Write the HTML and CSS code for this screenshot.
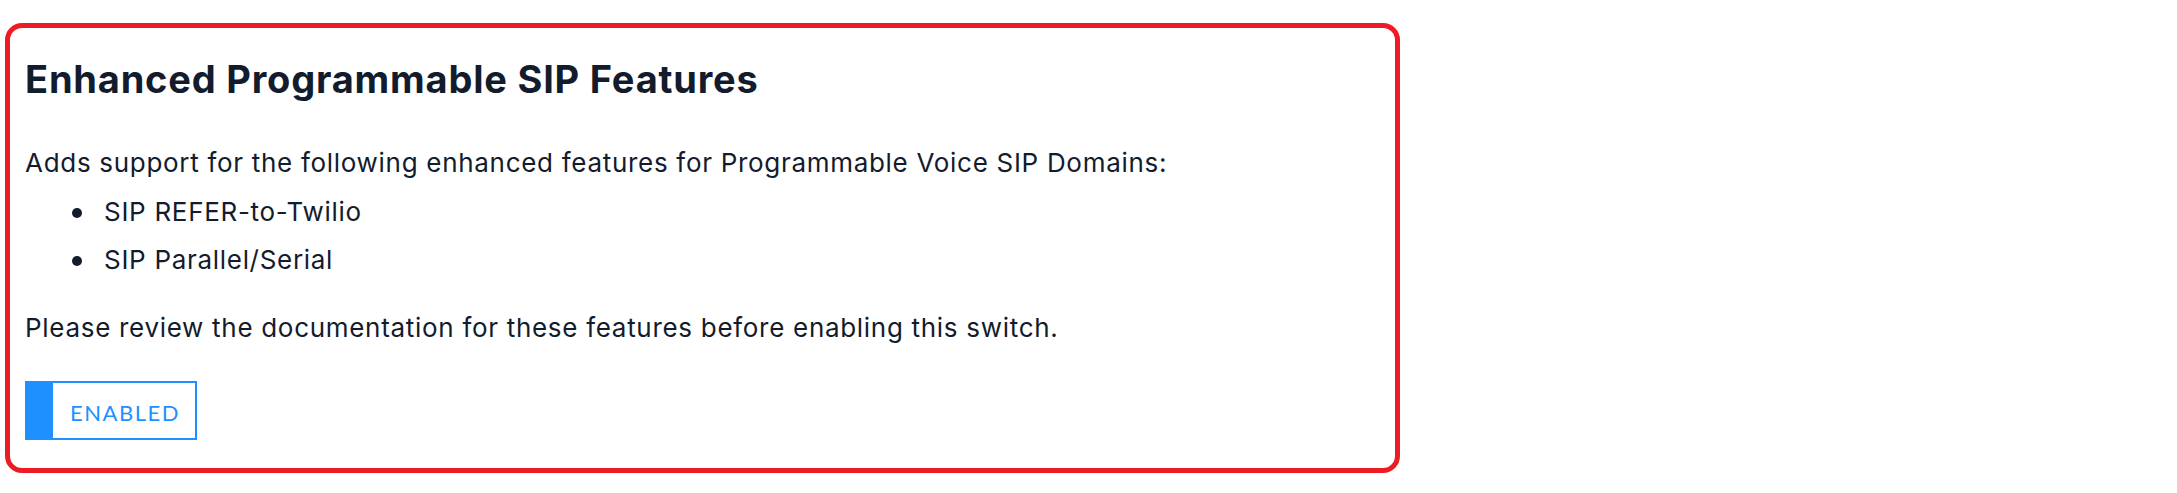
FILE: index.html
```html
<!DOCTYPE html>
<html>
<head>
<meta charset="utf-8">
<title>Enhanced Programmable SIP Features</title>
<link rel="stylesheet" href="styles.css">
</head>
<body>
<div class="feature-card">
  <h1 class="feature-title">Enhanced Programmable SIP Features</h1>
  <p class="feature-text">Adds support for the following enhanced features for Programmable Voice SIP Domains:</p>
  <ul class="feature-list">
    <li>SIP REFER-to-Twilio</li>
    <li>SIP Parallel/Serial</li>
  </ul>
  <p class="feature-note">Please review the documentation for these features before enabling this switch.</p>
  <div class="toggle on">
    <span class="toggle-knob"></span>
    <span class="toggle-label">ENABLED</span>
  </div>
</div>
</body>
</html>
```

FILE: styles.css
```css
body {
  margin: 0;
  background: #fff;
  font-family: Inter, "Noto Sans", sans-serif;
  color: #121c2d;
  }
.feature-card {
  box-sizing: border-box;
  width: 1395px;
  margin: 23px 0 0 5px;
  padding: 28px 15px 26px 15px;
  border: 5px solid #ed1c24;
  border-radius: 17px;
  }
.feature-title {
  margin: 0 0 41px 0;
  font-size: 38px;
  line-height: 46px;
  font-weight: 700;
  letter-spacing: 0.8px;
  }
.feature-text,
.feature-note {
  margin: 0;
  font-size: 26px;
  line-height: 39px;
  letter-spacing: 0.7px;
  }
.feature-list {
  list-style: none;
  margin: 10px 0 29px 0;
  padding-left: 47px;
  font-size: 26px;
  line-height: 39px;
  letter-spacing: 0.7px;
  }
.feature-list li {
  display: flex;
  align-items: center;
  }
.feature-list li::before {
  content: "";
  width: 10px;
  height: 10px;
  margin: 2px 22px 0 0;
  border-radius: 50%;
  background: #121c2d;
  }
.feature-list li + li {
  margin-top: 9px;
  }
.toggle {
  display: inline-flex;
  box-sizing: border-box;
  height: 59px;
  width: 172px;
  margin-top: 34px;
  border: 2px solid #1e90ff;
  }
.toggle-knob {
  width: 26px;
  background: #1e90ff;
  }
.toggle-label {
  flex: 1;
  display: flex;
  align-items: center;
  justify-content: center;
  padding: 3px 0 0 2px;
  font-family: Lato, "Open Sans", sans-serif;
  font-size: 22px;
  letter-spacing: 1.5px;
  color: #1e90ff;
  }
```
